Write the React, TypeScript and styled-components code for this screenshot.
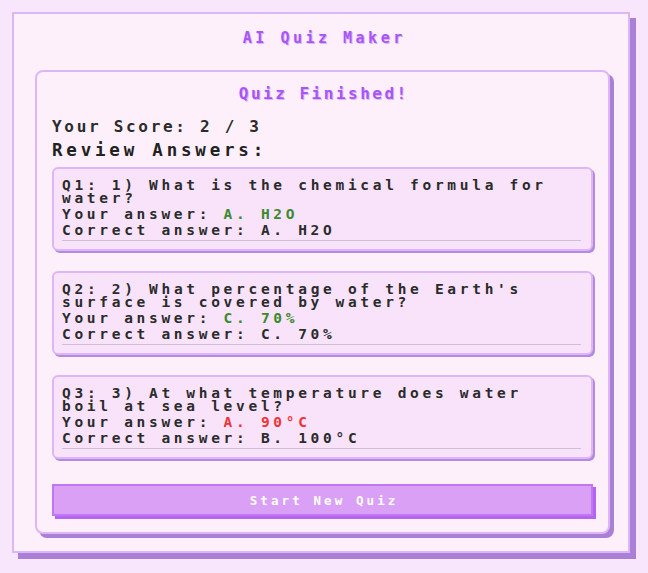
import React from "react";
import styled, { createGlobalStyle } from "styled-components";

const GlobalStyle = createGlobalStyle`
  html, body {
    margin: 0;
    padding: 0;
    background: #f8e6fc;
  }
  body {
    font-family: "DejaVu Sans Mono", "Liberation Mono", monospace;
    font-weight: 700;
    color: #2b2b2b;
  }
`;

const Page = styled.div`
  padding: 12px 18px 14px 12px;
`;

const Frame = styled.main`
  background: #fdf0fa;
  border: 2px solid #dcb6f5;
  box-shadow: 6px 6px 0 #a97fd8;
  padding: 14px 18px 17px 21px;
`;

const AppTitle = styled.h1`
  margin: 0 0 22px;
  padding-left: 3.5px;
  text-align: center;
  font-size: 15px;
  line-height: 20px;
  letter-spacing: 3.5px;
  font-weight: 700;
  color: #a855f7;
  text-shadow: 1px 1px 0 #dcb4fb;
`;

const ResultCard = styled.section`
  background: #fdf0fa;
  border: 2px solid #dcb6f5;
  border-radius: 8px;
  box-shadow: 4px 4px 0 #a97fd8;
  padding: 12px 15px 16px;
`;

const CardTitle = styled.h2`
  margin: 0 0 13px;
  padding-left: 2.5px;
  text-align: center;
  font-size: 16px;
  line-height: 20px;
  letter-spacing: 2.5px;
  font-weight: 700;
  color: #a855f7;
  text-shadow: 1px 1px 0 #dcb4fb;
`;

const Score = styled.p`
  margin: 0 0 2px;
  font-size: 16px;
  line-height: 20px;
  letter-spacing: 2.7px;
`;

const ReviewHeading = styled.h3`
  margin: 0 0 6px;
  font-size: 17.5px;
  line-height: 22px;
  letter-spacing: 3.8px;
  font-weight: 700;
  color: #222;
`;

const ReviewList = styled.div`
  display: flex;
  flex-direction: column;
  gap: 20px;
  margin-bottom: 25px;
`;

const ReviewItem = styled.article`
  background: #f8e3fb;
  border: 2px solid #dcb6f5;
  border-radius: 6px;
  box-shadow: 2px 2px 0 #b38ae0;
  padding: 10px 10px 8px 8px;
  font-size: 14.5px;
  letter-spacing: 3.7px;
`;

const Question = styled.div`
  line-height: 13px;
  margin-bottom: 1px;
`;

const AnswerLine = styled.div`
  line-height: 16px;
`;

const Picked = styled.span<{ $correct: boolean }>`
  color: ${(p) => (p.$correct ? "#3a8a2c" : "#ee3434")};
`;

const Divider = styled.hr`
  margin: 2px 0 0;
  border: 0;
  border-top: 1px solid #cdbfd4;
  height: 0;
`;

const StartButton = styled.button`
  display: block;
  width: 100%;
  height: 32px;
  padding: 0 0 0 3.1px;
  background: #d9a0f5;
  border: 2px solid #bf78f2;
  box-shadow: 3px 3px 0 #b464f0;
  color: #ffffff;
  font-family: inherit;
  font-weight: 700;
  font-size: 12.5px;
  letter-spacing: 3.1px;
  cursor: pointer;
`;

type Review = {
  n: number;
  question: string;
  picked: string;
  correct: string;
};

const reviews: Review[] = [
  { n: 1, question: "1) What is the chemical formula for water?", picked: "A. H2O", correct: "A. H2O" },
  { n: 2, question: "2) What percentage of the Earth's surface is covered by water?", picked: "C. 70%", correct: "C. 70%" },
  { n: 3, question: "3) At what temperature does water boil at sea level?", picked: "A. 90°C", correct: "B. 100°C" },
];

export default function App() {
  const score = reviews.filter((r) => r.picked === r.correct).length;
  return (
    <Page>
      <GlobalStyle />
      <Frame>
        <AppTitle>AI Quiz Maker</AppTitle>
        <ResultCard>
          <CardTitle>Quiz Finished!</CardTitle>
          <Score>
            Your Score: {score} / {reviews.length}
          </Score>
          <ReviewHeading>Review Answers:</ReviewHeading>
          <ReviewList>
            {reviews.map((r) => (
              <ReviewItem key={r.n}>
                <Question>
                  Q{r.n}: {r.question}
                </Question>
                <AnswerLine>
                  Your answer: <Picked $correct={r.picked === r.correct}>{r.picked}</Picked>
                </AnswerLine>
                <AnswerLine>Correct answer: {r.correct}</AnswerLine>
                <Divider />
              </ReviewItem>
            ))}
          </ReviewList>
          <StartButton type="button">Start New Quiz</StartButton>
        </ResultCard>
      </Frame>
    </Page>
  );
}
